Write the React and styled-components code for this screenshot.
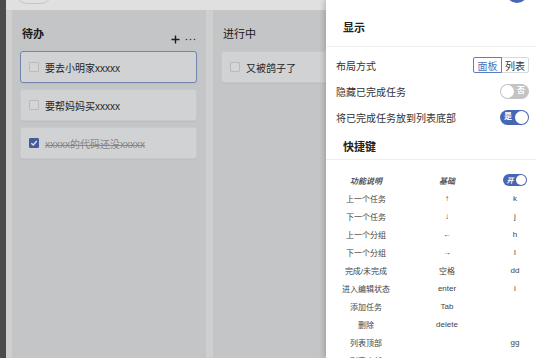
import { Fragment } from 'react'
import styled, { createGlobalStyle } from 'styled-components'

const GlobalStyle = createGlobalStyle`
  html, body {
    margin: 0;
    padding: 0;
    background: #ffffff;
  }
  body {
    font-family: "Liberation Sans", "Noto Sans CJK SC", sans-serif;
  }
`

const Page = styled.div`
  position: relative;
  display: flex;
  width: 536px;
  height: 358px;
  overflow: hidden;
`

const Sidebar = styled.div`
  width: 6px;
  flex-shrink: 0;
  background: #565656;
`

const Main = styled.div`
  flex: 1;
  display: flex;
  flex-direction: column;
  background: #ececec;
`

const Header = styled.div`
  height: 10px;
  flex-shrink: 0;
  overflow: hidden;
  display: flex;
  padding-left: 10px;
  background: #ffffff;
`

const HeaderPill = styled.div`
  width: 34px;
  height: 22px;
  margin-top: -20px;
  border-radius: 11px;
  border: 1px solid #e2e2e2;
  background: #ffffff;
`

const Board = styled.div`
  flex: 1;
  display: flex;
  gap: 7px;
  padding-left: 6px;
`

const Column = styled.div`
  width: 194px;
  flex-shrink: 0;
  padding: 0 9px 0 8px;
  box-sizing: border-box;
  background: #e0e1e3;
`

const ColumnHeader = styled.div`
  height: 41px;
  box-sizing: border-box;
  padding: 17px 1px 0 2px;
  display: flex;
  justify-content: space-between;
  line-height: 14px;
`

const ColumnTitle = styled.span`
  font-size: 11px;
  font-weight: ${(p) => (p.$light ? 400 : 700)};
  color: #222;
`

const ColumnActions = styled.div`
  display: flex;
  align-items: center;
  gap: 5px;
  color: #333;
`

const Cards = styled.div`
  display: flex;
  flex-direction: column;
  gap: 6px;
`

const Card = styled.div`
  height: 32px;
  box-sizing: border-box;
  display: flex;
  align-items: center;
  gap: 6px;
  padding: 0 8px;
  border-radius: 3px;
  border: 1px solid ${(p) => (p.$active ? '#8494c6' : '#e4e5e7')};
  background: #eeeff1;
  box-shadow: 0 1px 1px rgba(0, 0, 0, 0.04);
  white-space: nowrap;
  width: ${(p) => (p.$wide ? '220px' : 'auto')};
`

const Check = styled.span`
  width: 10px;
  height: 10px;
  flex-shrink: 0;
  box-sizing: border-box;
  border-radius: 1px;
  border: 1px solid ${(p) => (p.$checked ? '#5069b0' : '#d4d4d6')};
  background: ${(p) => (p.$checked ? '#5069b0' : '#f3f3f4')};
  display: flex;
  align-items: center;
  justify-content: center;
`

const CardText = styled.span`
  font-size: 10px;
  color: ${(p) => (p.$done ? '#9a9a9a' : '#2a2a2a')};
  text-decoration: ${(p) => (p.$done ? 'line-through' : 'none')};
`

const Mask = styled.div`
  position: absolute;
  inset: 0;
  background: rgba(0, 0, 0, 0.12);
`

const Drawer = styled.div`
  position: absolute;
  top: 0;
  right: 0;
  bottom: 0;
  width: 210px;
  background: #ffffff;
  box-shadow: -2px 0 5px rgba(0, 0, 0, 0.18);
  display: flex;
  flex-direction: column;
`

const FloatButton = styled.div`
  position: absolute;
  top: -19px;
  right: 8px;
  width: 22px;
  height: 22px;
  border-radius: 50%;
  background: #4766b4;
`

const SectionTitle = styled.div`
  height: ${(p) => p.$height}px;
  box-sizing: border-box;
  padding: ${(p) => p.$top}px 17px 0;
  line-height: 14px;
  font-size: 11px;
  font-weight: 700;
  color: #222;
  border-bottom: 1px solid #eeeeee;
  flex-shrink: 0;
`

const Settings = styled.div`
  padding: 5px 7px 0 10px;
  display: flex;
  flex-direction: column;
`

const SettingRow = styled.div`
  height: 26px;
  display: flex;
  align-items: center;
  justify-content: space-between;
  font-size: 10px;
  color: #333;
`

const Segmented = styled.div`
  display: flex;
`

const Segment = styled.span`
  height: 16px;
  width: ${(p) => (p.$first ? '29px' : '28px')};
  box-sizing: border-box;
  display: flex;
  align-items: center;
  justify-content: center;
  font-size: 10px;
  border: 1px solid ${(p) => (p.$selected ? '#5b7cc8' : '#d9d9d9')};
  margin-left: ${(p) => (p.$first ? '0' : '-1px')};
  position: relative;
  z-index: ${(p) => (p.$selected ? 1 : 0)};
  color: ${(p) => (p.$selected ? '#4a6fc0' : '#333')};
  border-radius: ${(p) => (p.$first ? '2px 0 0 2px' : '0 2px 2px 0')};
`

const Toggle = styled.span`
  width: ${(p) => (p.$small ? 24 : 29)}px;
  height: ${(p) => (p.$small ? 12 : 15)}px;
  box-sizing: border-box;
  border-radius: 8px;
  padding: 1px;
  display: flex;
  align-items: center;
  flex-direction: ${(p) => (p.$on ? 'row' : 'row-reverse')};
  justify-content: space-between;
  background: ${(p) => (p.$on ? '#4766b4' : '#c4c4c4')};
`

const ToggleLabel = styled.span`
  flex: 1;
  text-align: center;
  font-size: ${(p) => (p.$small ? 7 : 8)}px;
  font-weight: 700;
  font-style: ${(p) => (p.$small ? 'italic' : 'normal')};
  color: #ffffff;
  line-height: 1;
`

const Knob = styled.span`
  width: ${(p) => (p.$small ? 10 : 13)}px;
  height: ${(p) => (p.$small ? 10 : 13)}px;
  border-radius: 50%;
  background: #ffffff;
  flex-shrink: 0;
`

const Table = styled.div`
  padding: 11px 0 0 10px;
  display: grid;
  grid-template-columns: 60px 102px 34px;
  grid-auto-rows: 18px;
  align-items: center;
  justify-items: center;
  font-size: 8px;
  color: #444;
  white-space: nowrap;
`

const HeadCell = styled.span`
  font-style: italic;
  font-weight: 700;
  color: #555;
`

const shortcuts = [
  ['上一个任务', '↑', 'k'],
  ['下一个任务', '↓', 'j'],
  ['上一个分组', '←', 'h'],
  ['下一个分组', '→', 'l'],
  ['完成/未完成', '空格', 'dd'],
  ['进入编辑状态', 'enter', 'i'],
  ['添加任务', 'Tab', ''],
  ['删除', 'delete', ''],
  ['列表顶部', '', 'gg'],
  ['列表底部', '', 'G'],
]

const CheckMark = () => (
  <svg width="8" height="8" viewBox="0 0 8 8">
    <path d="M1.3 4.2 L3.2 6 L6.8 2" fill="none" stroke="#fff" strokeWidth="1.4" />
  </svg>
)

const Plus = () => (
  <svg width="9" height="9" viewBox="0 0 9 9">
    <path d="M4.5 0.5 V8.5 M0.5 4.5 H8.5" stroke="#222" strokeWidth="1.4" />
  </svg>
)

const Dots = () => (
  <svg width="11" height="3" viewBox="0 0 11 3">
    <circle cx="1.5" cy="1.5" r="0.8" fill="#444" />
    <circle cx="5.5" cy="1.5" r="0.8" fill="#444" />
    <circle cx="9.5" cy="1.5" r="0.8" fill="#444" />
  </svg>
)

const App = () => {
  return (
    <>
      <GlobalStyle />
      <Page>
        <Sidebar />
        <Main>
          <Header>
            <HeaderPill />
          </Header>
          <Board>
            <Column>
              <ColumnHeader>
                <ColumnTitle>待办</ColumnTitle>
                <ColumnActions>
                  <Plus />
                  <Dots />
                </ColumnActions>
              </ColumnHeader>
              <Cards>
                <Card $active>
                  <Check />
                  <CardText>要去小明家xxxxx</CardText>
                </Card>
                <Card>
                  <Check />
                  <CardText>要帮妈妈买xxxxx</CardText>
                </Card>
                <Card>
                  <Check $checked>
                    <CheckMark />
                  </Check>
                  <CardText $done>xxxxx的代码还没xxxxx</CardText>
                </Card>
              </Cards>
            </Column>
            <Column>
              <ColumnHeader>
                <ColumnTitle $light>进行中</ColumnTitle>
              </ColumnHeader>
              <Cards>
                <Card $wide>
                  <Check />
                  <CardText>又被鸽子了</CardText>
                </Card>
              </Cards>
            </Column>
          </Board>
        </Main>
        <Mask />
        <Drawer>
          <FloatButton />
          <SectionTitle $height={47} $top={21}>显示</SectionTitle>
          <Settings>
            <SettingRow>
              <span>布局方式</span>
              <Segmented>
                <Segment $first $selected>面板</Segment>
                <Segment>列表</Segment>
              </Segmented>
            </SettingRow>
            <SettingRow>
              <span>隐藏已完成任务</span>
              <Toggle>
                <ToggleLabel>否</ToggleLabel>
                <Knob />
              </Toggle>
            </SettingRow>
            <SettingRow>
              <span>将已完成任务放到列表底部</span>
              <Toggle $on>
                <ToggleLabel>是</ToggleLabel>
                <Knob />
              </Toggle>
            </SettingRow>
          </Settings>
          <SectionTitle $height={30} $top={10}>快捷键</SectionTitle>
          <Table>
            <HeadCell>功能说明</HeadCell>
            <HeadCell>基础</HeadCell>
            <Toggle $on $small>
              <ToggleLabel $small>开</ToggleLabel>
              <Knob $small />
            </Toggle>
            {shortcuts.map(([name, basic, vim]) => (
              <Fragment key={name}>
                <span>{name}</span>
                <span>{basic}</span>
                <span>{vim}</span>
              </Fragment>
            ))}
          </Table>
        </Drawer>
      </Page>
    </>
  )
}

export default App
